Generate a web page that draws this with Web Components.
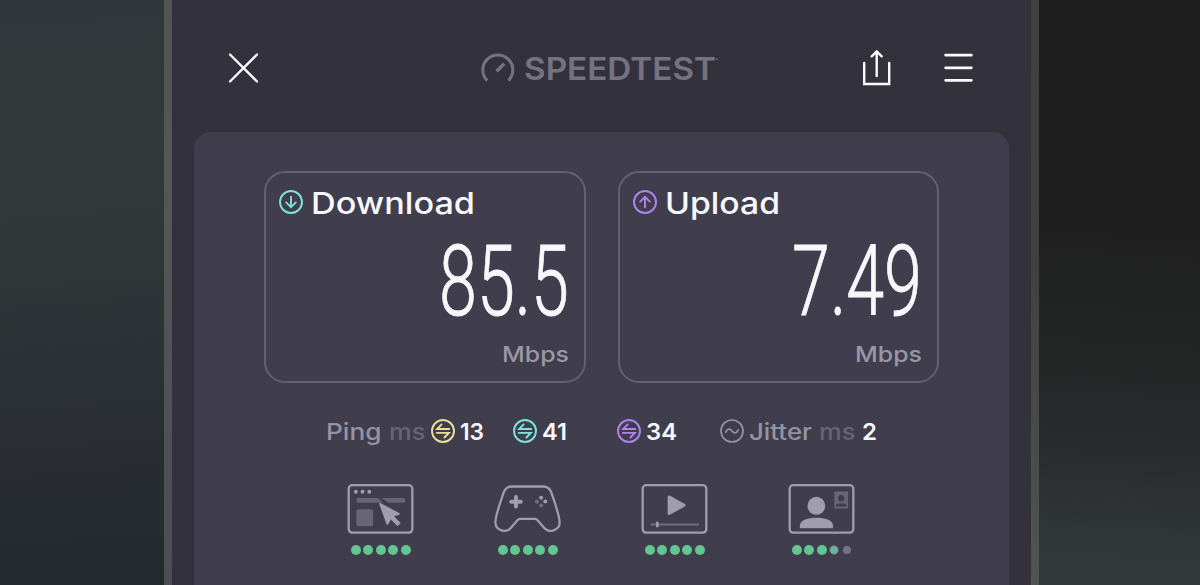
<!DOCTYPE html>
<html lang="en">
<head>
<meta charset="utf-8">
<title>Speedtest</title>
<style>
  body {
    margin: 0;
    overflow: hidden;
    background: #1e1e1e;
    font-family: Inter, "Noto Sans", sans-serif;
  }
</style>
</head>
<body>
<result-page>
  <top-bar slot="header"></top-bar>
  <speed-card slot="cards" icon="down" label="Download" label-width="164" value="85.5" value-width="130"></speed-card>
  <speed-card slot="cards" icon="up" label="Upload" label-width="115" value="7.49" value-width="130"></speed-card>
  <latency-row slot="latency"></latency-row>
  <activity-score slot="scores" icon="web" score="5"></activity-score>
  <activity-score slot="scores" icon="game" score="5"></activity-score>
  <activity-score slot="scores" icon="video" score="5"></activity-score>
  <activity-score slot="scores" icon="call" score="3.5"></activity-score>
</result-page>

<script>
const swap = `
  <circle cx="12" cy="12" r="11"/>
  <path d="M18.2 10H6.200L10.600 5.400M5.800 13.900H17.800L13.400 18.500"/>`;

const icons = {
  close: `<svg width="31" height="31" viewBox="0 0 31 31" stroke-width="2.3"><path d="M2 1.500L29 28.500M29 1.500L2 28.500"/></svg>`,
  share: `<svg width="28" height="36" viewBox="0 0 28 36" stroke-width="2.4"><path d="M1.2 13V34H26.200V13M13.700 26V2M8.700 6.300L13.700 1.400L18.700 6.300"/></svg>`,
  menu: `<svg width="29" height="30" viewBox="0 0 29 30" stroke-width="2.7"><path d="M1.6 2.200H27.4M1.6 14.800H27.4M1.6 27.300H27.4"/></svg>`,
  gauge: `<svg width="34" height="30" viewBox="0 0 34 30" stroke-width="3"><path d="M6.2 27.6A15 15 0 1 1 27.4 27.600"/><path d="M15.600 18.200L23.200 10.800" stroke-width="3.6"/></svg>`,
  down: `<svg width="24" height="24" viewBox="0 0 24 24" stroke-width="1.9"><circle cx="12" cy="12" r="11"/><path d="M12 6.8V17M7.2 12.4L12 17.1L16.8 12.4"/></svg>`,
  up: `<svg width="24" height="24" viewBox="0 0 24 24" stroke-width="1.9"><circle cx="12" cy="12" r="11"/><path d="M12 17.2V7M7.2 11.6L12 6.9L16.8 11.6"/></svg>`,
  swap: `<svg width="24" height="24" viewBox="0 0 24 24" stroke-width="1.9">${swap}</svg>`,
  jitter: `<svg width="24" height="24" viewBox="0 0 24 24" stroke-width="1.7"><circle cx="12" cy="12" r="11"/><path d="M5.8 13.2C7.4 9.4 9.8 9.2 12 12S16.6 14.6 18.2 10.8"/></svg>`,
  web: `<svg width="67" height="50" viewBox="0 0 68 50" stroke-width="2.3" preserveAspectRatio="none">
    <rect x="1.7" y="1.2" width="64.6" height="47.4" rx="3.5"/>
    <g fill="currentColor" stroke="none">
      <circle cx="9" cy="7.8" r="2"/><circle cx="15.8" cy="7.8" r="2"/><circle cx="22.6" cy="7.8" r="2"/>
      <path opacity=".42" d="M11.5 14H30Q33 14.3 36 18.8H11.5Q9.5 18.8 9.5 16.4T11.5 14ZM35 14H57Q59.3 14 59.3 16.4T57 18.8H42Z"/>
      <rect opacity=".42" x="9.5" y="25.3" width="17" height="17" rx="2"/>
      <path d="M32.8 20.2Q32.5 18.2 34.3 19.2L53 29Q54.5 30.2 52.7 30.9L47.7 32.3L54.5 39L51.3 42.2L44.5 35.5L41.800 40.3Q40.700 41.600 39.9 39.800Z"/>
    </g></svg>`,
  game: `<svg width="67" height="50" viewBox="0 0 68 50" stroke-width="2.3" preserveAspectRatio="none">
    <path d="M18 2.5H50C54.5 2.5 56.6 4.5 58.2 8.5C61.5 18 66.600 31.5 66.600 38.5C66.600 46.500 55.500 49.500 50.800 43.800L43.800 35.800Q42.700 34.800 41.500 34.800H26.500Q25.300 34.800 24.200 35.800L17.200 43.800C12.500 49.500 1.400 46.500 1.400 38.500C1.400 31.500 6.500 18 9.800 8.500C11.400 4.500 13.500 2.500 18 2.500Z"/>
    <path stroke-width="4" d="M22.300 13V22.600M17.500 17.800H27.100"/>
    <g fill="currentColor" stroke="none"><circle cx="47.900" cy="13.700" r="2"/><circle cx="52.100" cy="17.500" r="2"/><circle opacity=".5" cx="43.500" cy="17.700" r="2"/><circle opacity=".5" cx="47.900" cy="21.500" r="2"/></g></svg>`,
  video: `<svg width="67" height="50" viewBox="0 0 68 50" stroke-width="2.3" preserveAspectRatio="none">
    <rect x="1.7" y="1.2" width="64.6" height="47.4" rx="3.5"/>
    <path fill="currentColor" stroke-width="3" stroke-linejoin="round" d="M28.500 12.900L43.700 21.200L28.500 29.500Z"/>
    <path opacity=".5" stroke-width="2.2" d="M10.5 40.500H58"/><path stroke-width="2.6" stroke-linecap="butt" d="M16.5 37.800V43.200"/></svg>`,
  call: `<svg width="67" height="50" viewBox="0 0 68 50" stroke-width="2.3" preserveAspectRatio="none">
    <rect x="1.7" y="1.2" width="64.6" height="47.4" rx="3.5"/>
    <g fill="currentColor" stroke="none"><circle cx="28.8" cy="21.8" r="9"/>
    <path d="M12 44.3V41C13 36 20 33.700 28.800 33.700S44.800 36 45.600 41V44.300Z"/>
    <rect opacity=".42" x="47" y="7.500" width="14" height="17" rx=".8"/></g>
    <g fill="#403e4c" stroke="none"><circle cx="54" cy="14.300" r="3.200"/><path d="M48.500 22.500V21.500C49 18.500 59 18.500 59.500 21.500V22.500Z"/></g></svg>`,
};

const iconStyle = `
  svg {
    display: block;
    flex: none;
    fill: none;
    stroke: currentColor;
    stroke-linecap: round;
  }`;

// One line of text, stretched to the width it is given
class FitText extends HTMLElement {
  connectedCallback() {
    const width = Number(this.getAttribute("width"));
    const shadowRoot = this.attachShadow({ mode: "open" });
    shadowRoot.innerHTML = `
      <style>
        :host {
          display: block;
          flex: none;
          width: ${width}px;
          white-space: nowrap;
        }

        span {
          display: inline-block;
          vertical-align: top;
          transform-origin: 0 50%;
        }
      </style>
      <span></span>`;
    const span = shadowRoot.querySelector("span");
    span.textContent = this.getAttribute("text");
    span.style.transform = `scaleX(${width / span.getBoundingClientRect().width})`;
  }
}

class TopBar extends HTMLElement {
  connectedCallback() {
    this.attachShadow({ mode: "open" }).innerHTML = `
      <style>
        ${iconStyle}
        :host {
          display: flex;
          align-items: center;
          box-sizing: border-box;
          height: 132px;
          padding: 4px 58px 0 56px;
          color: #fafafd;
        }

        .logo {
          display: flex;
          align-items: center;
          gap: 9px;
          width: 238px;
          margin: 0 144px 0 222px;
          color: #747381;
          font: 600 31.5px/32px Inter, sans-serif;
        }

        .logo fit-text {
          padding-top: 2px;
        }

        .mark {
          align-self: flex-start;
          width: 2px;
          height: 2px;
          margin: 7px 0 0 -9px;
          border-radius: 50%;
          background: #676674;
        }

        .logo svg {
          stroke-linecap: butt;
        }

        .menu {
          margin-left: 53px;
        }
      </style>
      ${icons.close}
      <div class="logo">${icons.gauge}<fit-text text="SPEEDTEST" width="192"></fit-text><i class="mark"></i></div>
      ${icons.share}
      <div class="menu">${icons.menu}</div>`;
  }
}

class SpeedCard extends HTMLElement {
  connectedCallback() {
    const attr = (name) => this.getAttribute(name);
    const color = attr("icon") === "down" ? "#7fe3dc" : "#b083ec";
    this.attachShadow({ mode: "open" }).innerHTML = `
      <style>
        ${iconStyle}
        :host {
          display: flex;
          flex-direction: column;
          box-sizing: border-box;
          width: 321.5px;
          height: 212px;
          padding: 14px 15px 0 13px;
          border: 2px solid #626170;
          border-radius: 21px;
          color: #f8f8fc;
        }

        .title {
          display: flex;
          align-items: center;
          gap: 8px;
          font: 500 30px/30px Inter, sans-serif;
        }

        .title fit-text {
          padding-top: 1px;
          margin-bottom: -1px;
        }

        svg {
          color: ${color};
        }

        .value {
          align-self: flex-end;
          margin-top: 15px;
          font: 300 99px/99px Roboto, sans-serif;
          -webkit-text-stroke: 0.9px currentColor;
        }

        .unit {
          align-self: flex-end;
          margin-top: 12px;
          color: #9897a6;
          font: 500 22px/22px Inter, sans-serif;
        }
      </style>
      <div class="title">${icons[attr("icon")]}<fit-text text="${attr("label")}" width="${attr("label-width")}"></fit-text></div>
      <fit-text class="value" text="${attr("value")}" width="${attr("value-width")}"></fit-text>
      <fit-text class="unit" text="Mbps" width="67"></fit-text>`;
  }
}

class LatencyRow extends HTMLElement {
  connectedCallback() {
    this.attachShadow({ mode: "open" }).innerHTML = `
      <style>
        ${iconStyle}
        :host {
          display: flex;
          align-items: center;
          height: 24px;
          color: #f8f8fc;
          font: 600 23px/24px Inter, sans-serif;
        }

        div {
          display: flex;
          align-items: center;
        }

        fit-text {
          padding-top: 1px;
          margin-bottom: -1px;
        }

        .name {
          color: #9493a2;
          font-weight: 500;
        }

        .ms {
          margin: 0 6px -1px 7px;
          color: #666573;
          font-weight: 500;
        }

        svg {
          margin-right: 5px;
        }

        .idle svg { color: #e9df9b; }
        .down svg { color: #7fe3dc; }
        .up svg { color: #b083ec; }
        .jitter svg { color: #9493a2; }
        .down { margin-left: 29px; }
        .up { margin-left: 50px; }
        .jitter { margin-left: 43px; }
      </style>
      <fit-text class="name" text="Ping" width="55.5"></fit-text>
      <fit-text class="ms" text="ms" width="36.500"></fit-text>
      <div class="idle">${icons.swap}<fit-text text="13" width="24"></fit-text></div>
      <div class="down">${icons.swap}<fit-text text="41" width="25"></fit-text></div>
      <div class="up">${icons.swap}<fit-text text="34" width="31"></fit-text></div>
      <div class="jitter">${icons.jitter}
        <fit-text class="name" text="Jitter" width="63"></fit-text>
        <fit-text class="ms" text="ms" width="36.500"></fit-text>
        <fit-text text="2" width="15"></fit-text>
      </div>`;
  }
}

class ActivityScore extends HTMLElement {
  connectedCallback() {
    const score = Number(this.getAttribute("score"));
    let dots = "";
    for (let i = 0; i < 5; i++) {
      const state = score >= i + 1 ? "full" : score > i ? "half" : "";
      dots += `<i class="${state}"></i>`;
    }
    this.attachShadow({ mode: "open" }).innerHTML = `
      <style>
        ${iconStyle}
        :host {
          display: flex;
          flex-direction: column;
          align-items: center;
          width: 67px;
          color: #a09eae;
        }

        .dots {
          display: flex;
          gap: 2.5px;
          margin-top: 10.5px;
        }

        i {
          box-sizing: border-box;
          width: 10px;
          height: 10px;
          border: 1px solid transparent;
          border-radius: 50%;
          background: #787286 padding-box;
        }

        .full {
          border: 0;
          background: #62c592;
        }

        .half {
          border: 1px solid #59606b;
          background: #69b4a0;
        }
      </style>
      ${icons[this.getAttribute("icon")]}
      <div class="dots">${dots}</div>`;
  }
}

class ResultPage extends HTMLElement {
  connectedCallback() {
    this.attachShadow({ mode: "open" }).innerHTML = `
      <style>
        :host {
          display: grid;
          grid-template-columns: 164px 8px 859px 8px 1fr;
          height: 585px;
          overflow: hidden;
        }

        .left { background: linear-gradient(175deg, #303639 0%, #33383a 22%, #303538 45%, #292d31 75%, #24292d 100%); }
        .right { background: linear-gradient(184deg, #1e1e1e 0%, #1e1e1e 35%, #232424 55%, #282a2b 72%, #303537 88%, #34393b 100%); }
        .edge { background: linear-gradient(#505457, #54575a 30%, #4a4e52 100%); }
        .edge.dark { background: linear-gradient(#3f3f3f, #414141 45%, #4a4c4b 75%, #525656); }

        main {
          background: #33323c;
        }

        .panel {
          box-sizing: border-box;
          height: 470px;
          margin: 0 22px;
          padding-top: 39px;
          border-radius: 17px;
          background: #403e4c;
        }

        .cards {
          display: flex;
          gap: 32px;
          margin-left: 70px;
        }

        .latency {
          margin: 36px 0 0 132px;
        }

        .scores {
          display: flex;
          gap: 80px;
          margin: 41px 0 0 153px;
        }
      </style>
      <div class="left"></div>
      <div class="edge"></div>
      <main>
        <slot name="header"></slot>
        <div class="panel">
          <div class="cards"><slot name="cards"></slot></div>
          <div class="latency"><slot name="latency"></slot></div>
          <div class="scores"><slot name="scores"></slot></div>
        </div>
      </main>
      <div class="edge dark"></div>
      <div class="right"></div>`;
  }
}

customElements.define("fit-text", FitText);
customElements.define("top-bar", TopBar);
customElements.define("speed-card", SpeedCard);
customElements.define("latency-row", LatencyRow);
customElements.define("activity-score", ActivityScore);
customElements.define("result-page", ResultPage);
</script>
</body>
</html>
